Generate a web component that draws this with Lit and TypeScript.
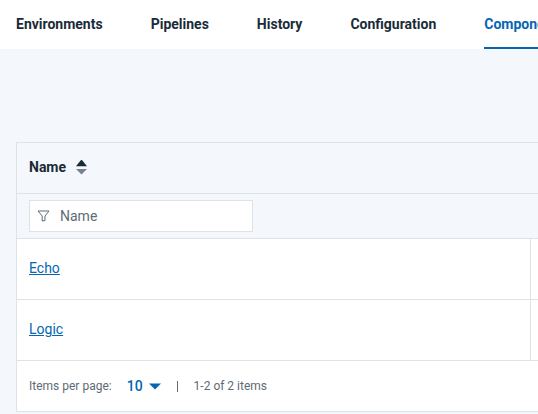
import { LitElement, css, html } from "lit";
import { customElement } from "lit/decorators.js";

const TABS = ["Environments", "Pipelines", "History", "Configuration", "Components"];

@customElement("app-root")
export class AppRoot extends LitElement {
  static styles = css`
    :host {
      display: block;
      width: 538px;
      height: 414px;
      overflow: hidden;
      background: #f4f7fb;
      font-family: Roboto, "Liberation Sans", sans-serif;
      color: #1a2b38;
    }
    .tabs {
      display: flex;
      gap: 48px;
      height: 49px;
      padding-left: 16px;
      background: #fff;
      white-space: nowrap;
    }
    .tab {
      box-sizing: border-box;
      height: 49px;
      line-height: 49px;
      font-size: 14px;
      font-weight: 700;
    }
    .tab.active {
      color: #0466b3;
      border-bottom: 2px solid #0466b3;
    }
    .table {
      box-sizing: border-box;
      width: 700px;
      margin: 93px 0 0 16px;
      border: 1px solid #dfe3e8;
    }
    .head {
      box-sizing: border-box;
      display: flex;
      align-items: center;
      gap: 10px;
      height: 51px;
      padding: 0 0 2px 12px;
      font-size: 14px;
      font-weight: 700;
      border-bottom: 1px solid #dfe3e8;
    }
    .filter-row {
      height: 45px;
      padding: 6px 12px 0;
      box-sizing: border-box;
      border-bottom: 1px solid #dfe3e8;
    }
    .filter {
      box-sizing: border-box;
      display: flex;
      align-items: center;
      gap: 10px;
      width: 224px;
      height: 32px;
      padding-left: 7px;
      background: #fff;
      border: 1px solid #dfe3e8;
      font-size: 14px;
      color: #5d6b76;
    }
    .row {
      display: flex;
      height: 60px;
      background: #fff;
      border-bottom: 1px solid #dfe3e8;
    }
    .name {
      box-sizing: border-box;
      width: 514px;
      padding-left: 12px;
      line-height: 59px;
      font-size: 14px;
      border-right: 1px solid #dfe3e8;
    }
    .name a {
      color: #0466b3;
      text-decoration: underline;
    }
    .pager {
      display: flex;
      align-items: center;
      height: 50px;
      padding-left: 12px;
      background: #fff;
      font-size: 12px;
      color: #5d6b76;
    }
    .size {
      display: flex;
      align-items: center;
      gap: 6px;
      margin-left: 15px;
      font-size: 14px;
      font-weight: 500;
      color: #0466b3;
    }
    .sep {
      width: 1px;
      height: 11px;
      margin: 0 16px;
      background: #5d6b76;
    }
    svg {
      display: block;
      flex: none;
    }
  `;

  render() {
    return html`
      <nav class="tabs">
        ${TABS.map(
          (t) => html`<div class="tab ${t === "Components" ? "active" : ""}">${t}</div>`
        )}
      </nav>
      <div class="table">
        <div class="head">
          <span>Name</span>
          <svg width="11" height="15" viewBox="0 0 11 15">
            <path d="M0 6.2 4.6.6a1.1 1.1 0 0 1 1.8 0L11 6.2Z" fill="#1a2b38" />
            <path d="M0 9 5.5 14.6 11 9Z" fill="#77838c" />
          </svg>
        </div>
        <div class="filter-row">
          <div class="filter">
            <svg width="13" height="12" viewBox="0 0 13 12" fill="none" stroke="#5d6b76">
              <path d="M1 1h11L8 6v4.5L5.2 11V6Z" stroke-linejoin="round" />
            </svg>
            <span>Name</span>
          </div>
        </div>
        <div class="row"><div class="name"><a href="#">Echo</a></div></div>
        <div class="row"><div class="name"><a href="#">Logic</a></div></div>
        <div class="pager">
          <span>Items per page:</span>
          <span class="size">
            10
            <svg width="12" height="7" viewBox="0 0 12 7"><path d="M0 .5h12L6 6.5Z" fill="#0466b3" /></svg>
          </span>
          <span class="sep"></span>
          <span>1-2 of 2 items</span>
        </div>
      </div>
    `;
  }
}
